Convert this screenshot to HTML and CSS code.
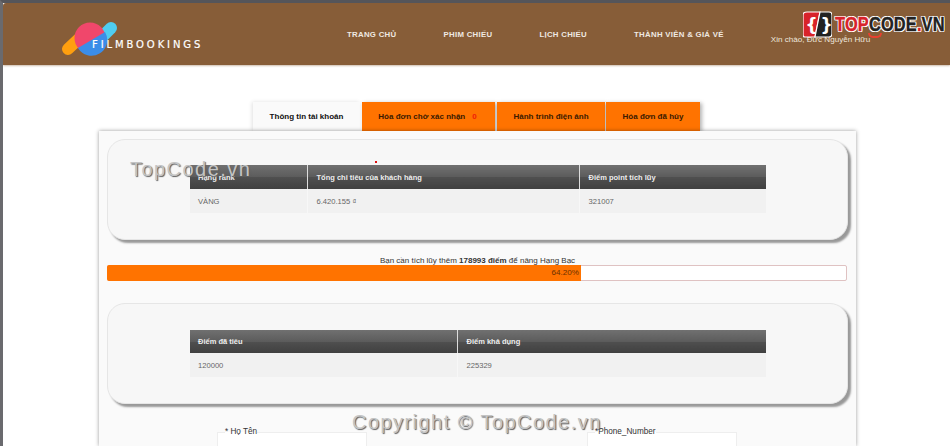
FILE: index.html
```html
<!DOCTYPE html>
<html lang="vi">
<head>
    <meta charset="UTF-8">
    <meta name="viewport" content="width=device-width, initial-scale=1.0">
    <title>FilmBookings - Thông tin tài khoản</title>
    <link rel="stylesheet" href="styles.css">
</head>
<body>
    <header class="header">
        <a class="logo" href="#">
            <svg class="logo-mark" width="60" height="40" viewBox="0 0 60 40">
                <line x1="7" y1="29" x2="24" y2="13" stroke="#ff9f0f" stroke-width="12" stroke-linecap="round"/>
                <line x1="36" y1="22" x2="50" y2="8" stroke="#4fcdf0" stroke-width="12" stroke-linecap="round"/>
                <circle cx="29" cy="18" r="15.5" fill="#f0476b"/>
                <path d="M17 28 L44 12 A15.5 15.5 0 0 1 17 28Z" fill="#3b8de8"/>
            </svg>
            <span class="logo-text">FILMBOOKINGS</span>
        </a>
        <nav class="nav">
            <a href="#">TRANG CHỦ</a>
            <a href="#">PHIM CHIẾU</a>
            <a href="#">LỊCH CHIẾU</a>
            <a href="#">THÀNH VIÊN &amp; GIÁ VÉ</a>
        </nav>
        <div class="greeting">Xin chào, Đức Nguyễn Hữu</div>
    </header>

    <!-- Watermark logo -->
    <div class="tc-logo">
        <svg width="29" height="27" viewBox="0 0 29 27">
            <path d="M4 1 H17 L12 26 H2 Q0 26 0 24 V4 Q0 1 4 1Z" fill="#d8232a" stroke="#fff" stroke-width="1.2"/>
            <path d="M17 1 H26 Q29 1 29 4 V23 Q29 26 26 26 H12Z" fill="#222" stroke="#fff" stroke-width="1.2"/>
            <text x="2.5" y="20" class="tc-brace">{</text>
            <text x="17.5" y="20" class="tc-brace">}</text>
        </svg>
        <span class="tc-smile"></span>
        <span class="tc-name"><span class="tc-red">TOP</span>CODE<span class="tc-red">.</span>VN</span>
    </div>

    <main class="content">
        <div class="tabs">
            <a class="tab active" href="#">Thông tin tài khoản</a>
            <a class="tab tab-wait" href="#">Hóa đơn chờ xác nhận <span class="tab-count">0</span></a>
            <a class="tab tab-trip" href="#">Hành trình điện ảnh</a>
            <a class="tab tab-cancel" href="#">Hóa đơn đã hủy</a>
        </div>

        <div class="panel">
            <div class="box">
                <span class="red-dot"></span>
                <table class="info-table">
                    <tr>
                        <th class="col-rank">Hạng rank</th>
                        <th class="col-total">Tổng chi tiêu của khách hàng</th>
                        <th>Điểm point tích lũy</th>
                    </tr>
                    <tr>
                        <td>VÀNG</td>
                        <td>6.420.155 ₫</td>
                        <td>321007</td>
                    </tr>
                </table>
            </div>

            <p class="progress-label">Bạn cần tích lũy thêm <b>178993 điểm</b> để nâng Hạng Bạc</p>
            <div class="progress">
                <div class="progress-fill" style="width: 474px">64.20%</div>
            </div>

            <div class="box box-points">
                <table class="info-table">
                    <tr>
                        <th class="col-half">Điểm đã tiêu</th>
                        <th>Điểm khả dụng</th>
                    </tr>
                    <tr>
                        <td>120000</td>
                        <td>225329</td>
                    </tr>
                </table>
            </div>

            <form class="form-row">
                <fieldset class="field">
                    <legend>* Họ Tên</legend>
                </fieldset>
                <fieldset class="field">
                    <legend>*Phone_Number</legend>
                </fieldset>
            </form>
        </div>
    </main>

    <div class="mark mark-top">TopCode.vn</div>
    <div class="mark mark-bottom">Copyright © TopCode.vn</div>
</body>
</html>
```

FILE: styles.css
```css
* {
    margin: 0;
    padding: 0;
    box-sizing: border-box;
}

html, body {
    height: 446px;
    overflow: hidden;
}

body {
    font-family: 'Liberation Sans', Arial, sans-serif;
    background: #fff;
    color: #222;
    border-top: 3px solid #55555a;
    border-left: 3px solid #6a6a6e;
    position: relative;
}

a {
    text-decoration: none;
    color: inherit;
}

/* Header */
.header {
    height: 62px;
    background: #875d38;
    box-shadow: 0 1px 2px rgba(135, 93, 56, 0.4);
    display: flex;
    align-items: center;
    border-top-left-radius: 3px;
}

.logo {
    display: flex;
    align-items: flex-end;
    margin-left: 58px;
    width: 286px;
    height: 40px;
    position: relative;
    top: 6px;
}

.logo-mark {
    flex: none;
}

.logo-text {
    position: absolute;
    left: 31px;
    top: 19px;
    font-family: 'DejaVu Sans', sans-serif;
    font-size: 10px;
    line-height: 12px;
    letter-spacing: 2.9px;
    color: #fff;
    -webkit-text-stroke: 0.2px #fff;
    white-space: nowrap;
}

.nav {
    display: flex;
    gap: 47px;
    font-size: 7.8px;
    font-weight: bold;
    letter-spacing: 0.3px;
    color: #f0e9e2;
    white-space: nowrap;
}

.greeting {
    margin-left: 47px;
    margin-top: 10px;
    font-size: 8.1px;
    color: #eee6dc;
    white-space: nowrap;
}

/* Watermark logo */
.tc-logo {
    position: absolute;
    left: 800px;
    top: 8px;
    display: flex;
    align-items: center;
    gap: 3px;
}

.tc-brace {
    font-family: 'DejaVu Sans', sans-serif;
    font-size: 17px;
    font-weight: bold;
    fill: #fff;
}

.tc-name {
    font-size: 19.5px;
    font-weight: bold;
    letter-spacing: 0.2px;
    color: #222;
    -webkit-text-stroke: 0.4px #222;
    text-shadow: 1px 0 0 #fff, -1px 0 0 #fff, 0 1px 0 #fff, 0 -1px 0 #fff, 1px 1px 0 #fff, -1px -1px 0 #fff, 1px -1px 0 #fff, -1px 1px 0 #fff;
    transform: scaleX(0.84);
    transform-origin: left center;
    margin-right: -20px;
}

.tc-red {
    color: #d8232a;
    -webkit-text-stroke: 0.4px #d8232a;
}

.tc-smile {
    position: absolute;
    left: 65px;
    top: 22px;
    width: 14px;
    height: 5px;
    border: 2px solid #e8402f;
    border-top: 0;
    border-radius: 0 0 8px 8px;
}

/* Tabs */
.content {
    width: 757px;
    margin-left: 96px;
}

.tabs {
    display: flex;
    gap: 2px;
    margin-top: 37px;
    margin-left: 154px;
    height: 29px;
}

.tab {
    display: flex;
    align-items: center;
    justify-content: center;
    height: 29px;
    font-size: 8px;
    font-weight: bold;
    background: #ff7300;
    color: #3a1a00;
    box-shadow: 2px 1px 4px rgba(0, 0, 0, 0.3);
    white-space: nowrap;
}

.tab.active {
    width: 107px;
    background: #fafafa;
    color: #111;
    box-shadow: -1px 0 4px rgba(0, 0, 0, 0.12);
}

.tab-wait {
    width: 133px;
    padding-right: 2px;
}

.tab-count {
    color: #f01d0a;
    margin-left: 7px;
}

.tab-trip {
    width: 108px;
}

.tab-cancel {
    width: 94px;
    margin-left: -1px;
}

/* Main panel */
.panel {
    height: 315px;
    background: #fafafa;
    padding: 8px 8px 0;
    box-shadow: 0 0 4px rgba(0, 0, 0, 0.4);
    position: relative;
}

.box {
    height: 101px;
    padding-top: 25px;
    background: #f7f7f7;
    border: 1px solid #e6e6e6;
    border-radius: 18px;
    box-shadow: 3px 3px 2px #999;
    position: relative;
}

.box-points {
    margin-top: 22px;
    padding-top: 26px;
}

.red-dot {
    position: absolute;
    left: 267px;
    top: 21px;
    width: 2px;
    height: 2px;
    background: #e01010;
}

.info-table {
    width: 576px;
    margin-left: 82px;
    border-collapse: collapse;
    table-layout: fixed;
}

.info-table th {
    height: 24px;
    padding-left: 9px;
    font-size: 7.5px;
    text-align: left;
    color: #eee;
    background: linear-gradient(to bottom, #707070 0%, #5c5c5c 50%, #4f4f4f 52%, #404040 100%);
    border-left: 1px solid #ddd;
}

.box-points .info-table th {
    height: 23px;
}

.info-table td {
    height: 24px;
    padding-left: 9px;
    font-size: 7.6px;
    color: #666;
    background: #f1f1f1;
    border-left: 1px solid #f7f7f7;
}

.info-table th:first-child,
.info-table td:first-child {
    border-left: 0;
    padding-left: 8px;
}

.col-rank {
    width: 117px;
}

.col-total {
    width: 272px;
}

.col-half {
    width: 267px;
}

/* Progress */
.progress-label {
    margin-top: 14px;
    height: 11px;
    font-size: 8px;
    line-height: 13px;
    text-align: center;
    color: #333;
}

.progress {
    width: 740px;
    height: 16px;
    border: 1px solid #dfc2c2;
    border-radius: 2px;
    background: #fff;
}

.progress-fill {
    height: 16px;
    margin: -1px 0 0 -1px;
    background: #ff7300;
    font-size: 8.1px;
    line-height: 16px;
    text-align: right;
    padding-right: 2px;
    color: #6b3000;
    border-radius: 2px 0 0 2px;
}

/* Form */
.form-row {
    display: flex;
    gap: 220px;
    margin-top: 23px;
    margin-left: 110px;
}

.field {
    width: 150px;
    height: 20px;
    border: 1px solid #eee;
    border-bottom: 0;
    background: #fff;
    padding-left: 7px;
}

.field legend {
    font-size: 8.2px;
    line-height: 10px;
    color: #333;
}

/* Site watermark */
.mark {
    position: absolute;
    font-size: 20px;
    letter-spacing: 1.45px;
    color: #c4c4c4;
    text-shadow: 1px 1px 1px #5c5c5c;
    white-space: nowrap;
}

.mark-top {
    left: 127px;
    top: 155px;
}

.mark-bottom {
    left: 349px;
    top: 408px;
}
```
